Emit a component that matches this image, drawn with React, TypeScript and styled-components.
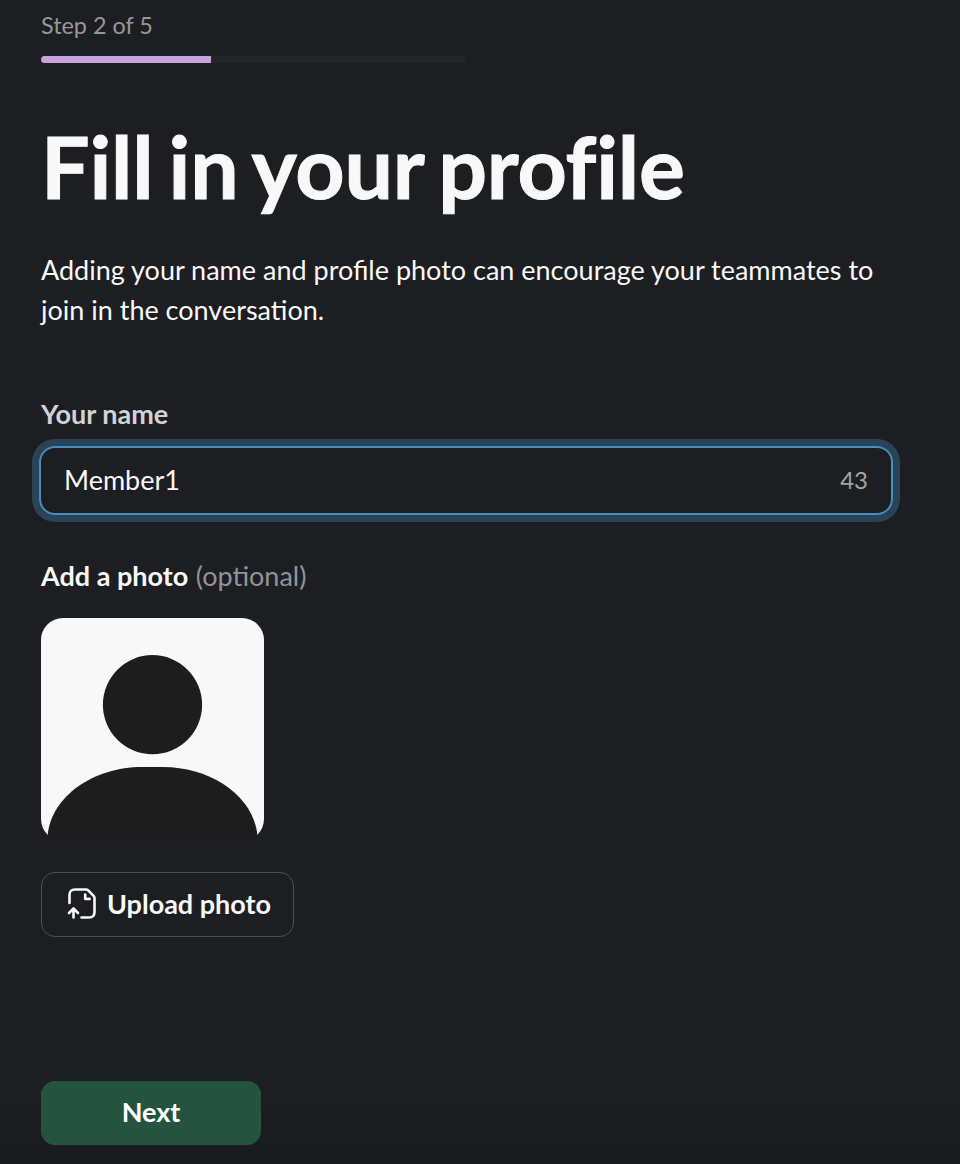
import React, { useState } from "react";
import styled, { createGlobalStyle } from "styled-components";

const GlobalStyle = createGlobalStyle`
  * { box-sizing: border-box; }
  body {
    margin: 0;
    background: #1d1e22;
    font-family: Lato, "Liberation Sans", sans-serif;
    color: #f8f8f8;
  }
`;

const Page = styled.main`
  height: 1164px;
  overflow: hidden;
  padding: 9px 67px 0 41px;
  background: linear-gradient(to bottom, #1d1e22 1090px, #1a1b1f 1164px);
`;

const Step = styled.div`
  font-size: 23.4px;
  line-height: 32px;
  color: #97989b;
`;

const Track = styled.div`
  width: 425px;
  height: 7px;
  margin-top: 15px;
  border-radius: 4px;
  overflow: hidden;
  background: #242529;
`;

const Progress = styled.div`
  height: 100%;
  background: #c8a2dc;
`;

const Title = styled.h1`
  margin: 55px 0 0;
  font-size: 86px;
  line-height: 96px;
  font-weight: 700;
  letter-spacing: -0.2px;
  word-spacing: -5.5px;
  -webkit-text-stroke: 1px currentColor;
  white-space: nowrap;
`;

const Description = styled.p`
  margin: 36px 0 0;
  font-size: 27px;
  line-height: 40px;
`;

const Label = styled.label`
  display: block;
  margin-top: 68px;
  font-size: 27px;
  line-height: 32px;
  font-weight: 700;
  color: #d2d3d4;
`;

const Field = styled.div`
  display: flex;
  align-items: center;
  width: 854px;
  height: 69px;
  margin: 16px 0 0 -2px;
  padding: 0 23px 2px;
  border: 2px solid #468fc0;
  border-radius: 16px;
  box-shadow: 0 0 0 7px #294357;
`;

const Input = styled.input`
  flex: 1;
  min-width: 0;
  padding: 0;
  border: 0;
  outline: 0;
  background: transparent;
  color: #f8f8f8;
  font: 400 27px/36px Lato, sans-serif;
`;

const Counter = styled.span`
  font-size: 24px;
  color: #a3a4a7;
`;

const PhotoHeading = styled.h2`
  margin: 45px 0 0;
  font-size: 27px;
  line-height: 32px;
  font-weight: 700;
`;

const Optional = styled.span`
  margin-left: 1px;
  font-weight: 400;
  color: #929396;
`;

const Avatar = styled.svg`
  display: block;
  width: 223px;
  height: 223px;
  margin-top: 26px;
`;

const Button = styled.button<{ $primary?: boolean }>`
  display: flex;
  align-items: center;
  justify-content: center;
  gap: 10px;
  width: ${(p) => (p.$primary ? "220px" : "253px")};
  height: ${(p) => (p.$primary ? "64px" : "65px")};
  margin-top: ${(p) => (p.$primary ? "144px" : "31px")};
  padding: ${(p) => (p.$primary ? "0 0 2px" : "0 0 2px 3px")};
  border: ${(p) => (p.$primary ? "0" : "1px solid #4c4d51")};
  border-radius: 14px;
  background: ${(p) => (p.$primary ? "#24543f" : "transparent")};
  color: ${(p) => (p.$primary ? "#ffffff" : "#f8f8f8")};
  font: 700 27px/36px Lato, sans-serif;
`;

const UploadIcon = () => (
  <svg width="30" height="32" viewBox="0 0.5 30 32" fill="none" stroke="currentColor" strokeWidth="2.6" strokeLinecap="round" strokeLinejoin="round">
    <path d="M2.5 15.5V7.5Q2.5 2 8 2H19Q20.3 2 21.2 2.9L26.6 8.3Q27.5 9.2 27.5 10.5V24.5Q27.5 30 22 30H14.5" />
    <path d="M18.2 7V11.4H22.6" />
    <path d="M6.5 30V21M2 25.5L6.5 21L11 25.5" />
  </svg>
);

export default function App() {
  const [name, setName] = useState("Member1");
  return (
    <>
      <GlobalStyle />
      <Page>
        <Step>Step 2 of 5</Step>
        <Track><Progress style={{ width: `${(2 / 5) * 100}%` }} /></Track>
        <Title>Fill in your profile</Title>
        <Description>Adding your name and profile photo can encourage your teammates to join in the conversation.</Description>
        <Label htmlFor="name">Your name</Label>
        <Field>
          <Input id="name" value={name} maxLength={50} onChange={(e) => setName(e.target.value)} />
          <Counter>{50 - name.length}</Counter>
        </Field>
        <PhotoHeading>Add a photo <Optional>(optional)</Optional></PhotoHeading>
        <Avatar viewBox="0 0 223 223">
          <defs><clipPath id="avatar"><rect width="223" height="223" rx="22" /></clipPath></defs>
          <g clipPath="url(#avatar)">
            <rect width="223" height="217" fill="#f8f8f8" />
            <circle cx="111.5" cy="86.7" r="49.6" fill="#1d1d1d" />
            <path d="M6.5 223V218C10 178 53 149 101 149H122C170 149 213 178 216.5 218V223Z" fill="#1d1d1d" />
          </g>
        </Avatar>
        <Button type="button"><UploadIcon />Upload photo</Button>
        <Button type="button" $primary>Next</Button>
      </Page>
    </>
  );
}
